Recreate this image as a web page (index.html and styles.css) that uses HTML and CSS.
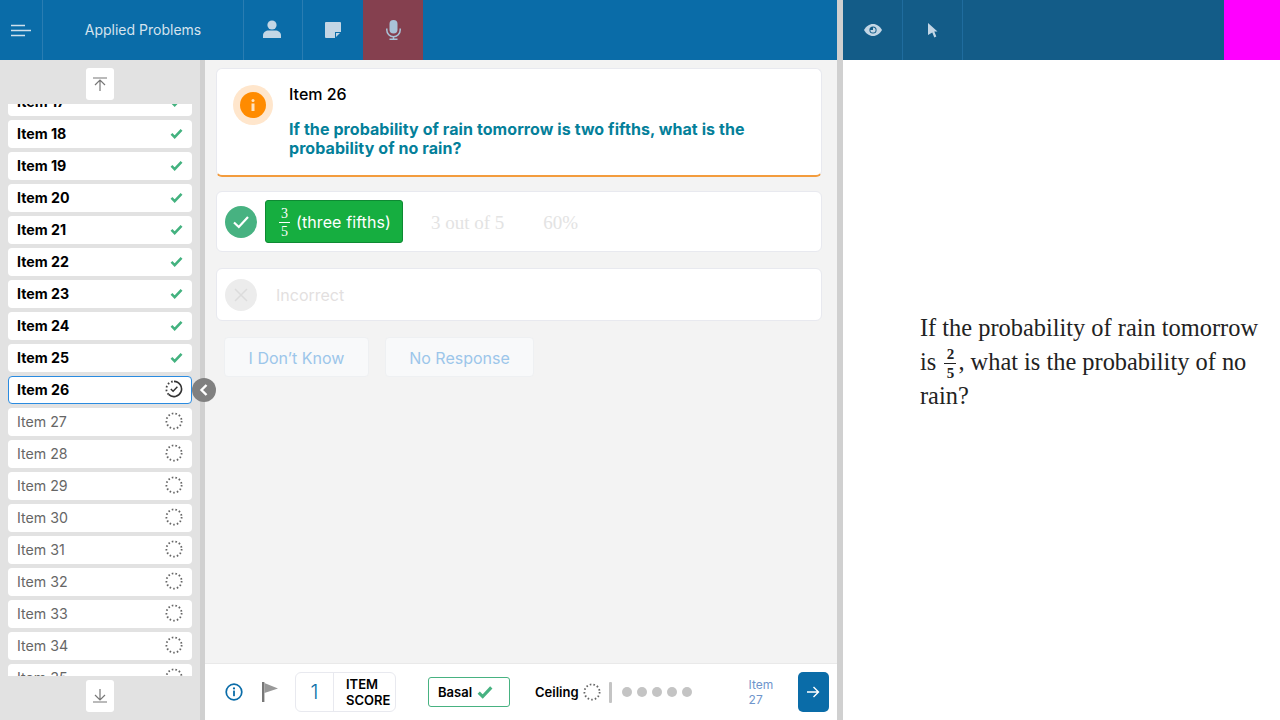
FILE: index.html
```html
<!DOCTYPE html>
<html lang="en">
<head>
<meta charset="utf-8">
<title>Applied Problems</title>
<link rel="stylesheet" href="styles.css">
</head>
<body>
<svg class="defs" width="0" height="0" aria-hidden="true">
  <symbol id="tick" viewBox="0 0 14 12"><path d="M1.500 6.500 5 10l7.500-8" fill="none" stroke="currentColor" stroke-width="2.800"/></symbol>
  <symbol id="pending" viewBox="0 0 18 18"><circle cx="9" cy="9" r="7.600" fill="none" stroke="#666" stroke-width="1.800" stroke-dasharray="1.600 2.100"/></symbol>
</svg>
<div class="app">
  <section class="left">
    <header class="bar bar-left">
      <div class="cell cell-menu">
        <svg width="20" height="13" viewBox="0 0 20 13"><path d="M0 1.500h14M0 6.500h20M0 11.500h14" stroke="#cfe0ec" stroke-width="1.600"/></svg>
      </div>
      <div class="cell cell-title">Applied Problems</div>
      <div class="cell cell-icon">
        <svg width="18" height="18" viewBox="0 0 18 18"><circle cx="9" cy="5" r="4.600" fill="#c3d6e5"/><path d="M0 18v-2.500C0 12.500 3 10.600 5.500 10.600h7c2.500 0 5.500 1.900 5.500 4.900V18z" fill="#c3d6e5"/></svg>
      </div>
      <div class="cell cell-note">
        <svg width="16" height="16" viewBox="0 0 16 16"><path d="M1 0h14a1 1 0 0 1 1 1v9H10v6H1a1 1 0 0 1-1-1V1a1 1 0 0 1 1-1z" fill="#c3d6e5"/><path d="M11 11h4l-4 4z" fill="#c3d6e5"/></svg>
      </div>
      <div class="cell cell-mic">
        <svg width="15" height="20" viewBox="0 0 15 20"><rect x="3.500" y="0" width="8" height="13.500" rx="4" fill="#a9c3d8"/><path d="M.8 8.500v1.500a6.700 6.700 0 0 0 13.400 0V8.500M7.500 16.700V19.500M3.500 19.300h8" fill="none" stroke="#a9c3d8" stroke-width="1.500"/></svg>
      </div>
    </header>
    <div class="workspace">
      <aside class="sidebar">
        <div class="scroll-row scroll-top">
          <button class="scroll-btn" aria-label="Scroll to top">
            <svg width="14" height="14" viewBox="0 0 14 14"><path d="M0 1h14M7 14V3M2 8l5-5 5 5" fill="none" stroke="#777" stroke-width="1.200"/></svg>
          </button>
        </div>
        <div class="list">
          <ul class="list-inner">
            <li class="item done">Item 17<svg class="tick"><use href="#tick"/></svg></li>
            <li class="item done">Item 18<svg class="tick"><use href="#tick"/></svg></li>
            <li class="item done">Item 19<svg class="tick"><use href="#tick"/></svg></li>
            <li class="item done">Item 20<svg class="tick"><use href="#tick"/></svg></li>
            <li class="item done">Item 21<svg class="tick"><use href="#tick"/></svg></li>
            <li class="item done">Item 22<svg class="tick"><use href="#tick"/></svg></li>
            <li class="item done">Item 23<svg class="tick"><use href="#tick"/></svg></li>
            <li class="item done">Item 24<svg class="tick"><use href="#tick"/></svg></li>
            <li class="item done">Item 25<svg class="tick"><use href="#tick"/></svg></li>
            <li class="item current">Item 26
              <svg class="ring" viewBox="0 0 18 18"><path d="M9 1.400a7.600 7.600 0 1 1-5.400 13" fill="none" stroke="#333" stroke-width="1.600"/><path d="M3.600 14.400A7.600 7.600 0 0 1 9 1.400" fill="none" stroke="#444" stroke-width="1.800" stroke-dasharray="1.600 2.100"/><path d="M5.800 9l2.300 2.300 4.300-4.600" fill="none" stroke="#333" stroke-width="1.400"/></svg>
            </li>
            <li class="item">Item 27<svg class="ring"><use href="#pending"/></svg></li>
            <li class="item">Item 28<svg class="ring"><use href="#pending"/></svg></li>
            <li class="item">Item 29<svg class="ring"><use href="#pending"/></svg></li>
            <li class="item">Item 30<svg class="ring"><use href="#pending"/></svg></li>
            <li class="item">Item 31<svg class="ring"><use href="#pending"/></svg></li>
            <li class="item">Item 32<svg class="ring"><use href="#pending"/></svg></li>
            <li class="item">Item 33<svg class="ring"><use href="#pending"/></svg></li>
            <li class="item">Item 34<svg class="ring"><use href="#pending"/></svg></li>
            <li class="item">Item 35<svg class="ring"><use href="#pending"/></svg></li>
          </ul>
        </div>
        <div class="scroll-row scroll-bottom">
          <button class="scroll-btn" aria-label="Scroll to bottom">
            <svg width="14" height="14" viewBox="0 0 14 14"><path d="M0 13h14M7 0v11M2 6l5 5 5-5" fill="none" stroke="#777" stroke-width="1.200"/></svg>
          </button>
        </div>
        <button class="collapse" aria-label="Collapse">
          <svg width="10" height="12" viewBox="0 0 10 12"><path d="M7.500 1 2.500 6l5 5" fill="none" stroke="#fff" stroke-width="2.400"/></svg>
        </button>
      </aside>
      <main class="main">
        <div class="content">
          <div class="card question">
            <div class="halo"><span class="dot">
              <svg width="4" height="12" viewBox="0 0 4 12"><circle cx="2" cy="1.600" r="1.500" fill="#ffe3bf"/><rect x=".5" y="4.500" width="3" height="7.500" fill="#ffe3bf"/></svg>
            </span></div>
            <div class="q-text">
              <h1>Item 26</h1>
              <p>If the probability of rain tomorrow is two fifths, what is the probability of no rain?</p>
            </div>
          </div>
          <div class="card row-correct">
            <span class="state ok"><svg width="18" height="14" viewBox="0 0 18 14"><path d="M2 7.500 6.800 12 16 2" fill="none" stroke="#fff" stroke-width="2.200"/></svg></span>
            <button class="answer"><span class="frac"><span>3</span><span class="den">5</span></span><span class="ans-text">(three fifths)</span></button>
            <span class="alt alt-first">3 out of 5</span>
            <span class="alt">60%</span>
          </div>
          <div class="card row-wrong">
            <span class="state no"><svg width="16" height="16" viewBox="0 0 16 16"><path d="M2 2l12 12M14 2 2 14" stroke="#dcdcdc" stroke-width="1.500"/></svg></span>
            <span class="wrong-label">Incorrect</span>
          </div>
          <div class="actions">
            <button class="ghost">I Don’t Know</button>
            <button class="ghost">No Response</button>
          </div>
        </div>
        <footer class="footer">
          <svg class="f-info" width="18" height="18" viewBox="0 0 18 18"><circle cx="9" cy="9" r="7.800" fill="none" stroke="#0a6ca8" stroke-width="1.700"/><circle cx="9" cy="5.400" r="1.100" fill="#0a6ca8"/><rect x="8.100" y="7.600" width="1.800" height="5.600" fill="#0a6ca8"/></svg>
          <svg class="f-flag" width="16" height="20" viewBox="0 0 16 20"><rect x="0" y="0" width="2.400" height="20" fill="#777"/><path d="M2.400 1 16 6.500 2.400 11z" fill="#999"/></svg>
          <div class="score"><span class="score-num">1</span><span class="score-label">ITEM<br>SCORE</span></div>
          <div class="basal">Basal<svg class="basal-tick"><use href="#tick"/></svg></div>
          <div class="ceiling">Ceiling<svg class="ring"><use href="#pending"/></svg></div>
          <span class="divider"></span>
          <div class="dots"><i></i><i></i><i></i><i></i><i></i></div>
          <div class="next-label">Item<br>27</div>
          <button class="next" aria-label="Next item">
            <svg width="14" height="12" viewBox="0 0 14 12"><path d="M1 6h11.500M7.500 1l5 5-5 5" fill="none" stroke="#fff" stroke-width="1.400"/></svg>
          </button>
        </footer>
      </main>
    </div>
  </section>
  <div class="splitter"></div>
  <section class="right">
    <header class="bar bar-right">
      <div class="cell cell-eye">
        <svg width="18" height="12" viewBox="0 0 18 12"><path d="M0 6c2-3.600 5.200-6 9-6s7 2.400 9 6c-2 3.600-5.200 6-9 6S2 9.600 0 6z" fill="#c3d6e5"/><circle cx="9" cy="6" r="3.600" fill="#135c88"/><path d="M9 3.400A2.600 2.600 0 1 1 6.400 6H9z" fill="#c3d6e5"/></svg>
      </div>
      <div class="cell cell-eye">
        <svg width="10" height="15" viewBox="0 0 10 15"><path d="M0 0l9.500 8.500H6.300l2 5-2 1-2-5L0 12z" fill="#c3d6e5"/></svg>
      </div>
      <div class="spacer"></div>
      <div class="magenta"></div>
    </header>
    <div class="stimulus">
      <p>If the probability of rain tomorrow is <span class="frac stim-frac"><span>2</span><span class="den">5</span></span>, what is the probability of no rain?</p>
    </div>
  </section>
</div>
</body>
</html>
```

FILE: styles.css
```css
* { box-sizing: border-box; }
html, body { margin: 0; padding: 0; height: 100%; }
body { font-family: Inter, "Liberation Sans", sans-serif; overflow: hidden; background: #fff; color: #000; }
button { font: inherit; border: 0; padding: 0; cursor: pointer; }
.defs { position: absolute; }

.app { display: flex; width: 1280px; height: 720px; }
.left { width: 837px; display: flex; flex-direction: column; }
.splitter { width: 6px; background: #d0d0d0; }
.right { flex: 1; display: flex; flex-direction: column; }

.bar { height: 60px; display: flex; flex: none; }
.bar-left { background: #0a6ca8; }
.bar-right { background: #135c88; }
.cell { display: flex; align-items: center; justify-content: center; border-right: 1px solid #2a7db2; }
.cell-menu { width: 43px; }
.cell-title { width: 201px; color: #d5e3ee; font-size: 14px; font-weight: 400; padding-bottom: 1px; }
.cell-icon { width: 59px; padding: 0 2px 2px 0; }
.cell-note { width: 60px; border-right: 0; }
.cell-mic { width: 60px; background: #85404f; border-right: 0; }
.cell-eye { width: 60px; border-right-color: #1f6c9e; }
.spacer { flex: 1; }
.magenta { width: 56px; background: #ff00ff; }

.workspace { flex: 1; display: flex; min-height: 0; }
.sidebar { position: relative; width: 205px; flex: none; background: #e2e2e2; border-right: 5px solid #d0d0d0; display: flex; flex-direction: column; }
.scroll-row { flex: none; display: flex; justify-content: center; }
.scroll-top { height: 44px; padding-top: 8px; }
.scroll-bottom { height: 44px; padding-top: 4px; }
.scroll-btn { width: 28px; height: 32px; background: #fff; border-radius: 3px; display: flex; align-items: center; justify-content: center; }
.list { flex: 1; overflow: hidden; min-height: 0; }
.list-inner { list-style: none; margin: -16px 0 0; padding: 0 8px; display: flex; flex-direction: column; gap: 4px; }
.item { flex: none; height: 28px; background: #fff; border-radius: 4px; display: flex; align-items: center; justify-content: space-between; padding: 0 9px 2px; font-size: 14.200px; color: #666; }
.item.done { font-weight: 700; color: #000; }
.item.current { font-weight: 700; color: #000; border: 1px solid #2a8be0; padding: 0 8px 2px; }
.tick { width: 13px; height: 11px; color: #43b27f; }
.ring { width: 18px; height: 18px; flex: none; }
.collapse { position: absolute; right: -16px; top: 318px; width: 24px; height: 24px; border-radius: 50%; background: #808080; display: flex; align-items: center; justify-content: center; }

.main { flex: 1; min-width: 0; display: flex; flex-direction: column; background: #f3f3f3; }
.content { flex: 1; padding: 8px 15px 0 11px; display: flex; flex-direction: column; }
.card { background: #fff; border: 1px solid #e8e9ef; border-radius: 6px; }
.question { height: 109px; margin-bottom: 14px; display: flex; padding: 16px 16px 0 16px; border-bottom: 2px solid #f39c3d; }
.halo { width: 40px; height: 40px; border-radius: 50%; background: #ffe6cc; display: flex; align-items: center; justify-content: center; flex: none; }
.dot { width: 26px; height: 26px; border-radius: 50%; background: #ff8b00; display: flex; align-items: center; justify-content: center; }
.q-text { margin: -1px 0 0 16px; }
h1 { margin: 0; font-size: 16px; font-weight: 500; line-height: 20px; }
.q-text p { margin: 16px 0 0; font-size: 16px; line-height: 19px; font-weight: 700; letter-spacing: .08px; color: #04809a; }
.row-correct { height: 61px; margin-bottom: 16px; display: flex; align-items: center; padding-left: 8px; }
.state { width: 32px; height: 32px; border-radius: 50%; display: flex; align-items: center; justify-content: center; flex: none; }
.state.ok { background: #47b281; }
.state.no { background: #ececec; }
.answer { margin-left: 8px; height: 43px; width: 138px; background: #16ae40; border: 1px solid #0e8a33; border-radius: 3px; color: #fff; display: flex; align-items: center; padding: 1px 0 0 13px; font-size: 16px; }
.frac { display: inline-flex; flex-direction: column; align-items: center; width: 11px; font-family: "Liberation Serif", serif; font-size: 14px; line-height: 17px; }
.frac .den { border-top: 1px solid currentColor; width: 100%; text-align: center; }
.ans-text { margin-left: 6px; letter-spacing: .1px; }
.alt { font-family: "Liberation Serif", serif; font-size: 19px; color: #e3e3e3; margin: 2px 0 0 39px; }
.alt-first { margin-left: 28px; }
.row-wrong { height: 53px; margin-bottom: 16px; display: flex; align-items: center; padding-left: 8px; }
.wrong-label { margin-left: 19px; font-size: 16px; color: #e3dfdf; }
.actions { display: flex; gap: 16px; padding-left: 8px; }
.ghost { height: 40px; background: #f8f9fa; border: 1px solid #eef0f2; border-radius: 4px; color: #9cc6ea; font-size: 16px; padding-top: 1px; }
.ghost:first-child { width: 145px; }
.ghost:last-child { width: 149px; }

.footer { flex: none; height: 57px; background: #fff; border-top: 1px solid #e9e9e9; display: flex; align-items: center; padding-left: 20px; }
.f-info { flex: none; }
.f-flag { flex: none; margin-left: 19px; }
.score { margin-left: 17px; width: 101px; height: 40px; border: 1px solid #e8e9ef; border-radius: 6px; display: flex; align-items: center; }
.score-num { width: 38px; height: 100%; border-right: 1px solid #e8e9ef; display: flex; align-items: center; justify-content: center; font-size: 20px; font-weight: 300; color: #0a6ca8; }
.score-label { margin-left: 12px; font-size: 13px; line-height: 16px; font-weight: 600; }
.basal { margin-left: 32px; width: 82px; height: 30px; border: 1.500px solid #47b281; border-radius: 3px; display: flex; align-items: center; padding-left: 9px; font-size: 13px; font-weight: 600; }
.basal-tick { width: 16px; height: 14px; margin-left: 5px; color: #47b281; }
.ceiling { margin-left: 25px; display: flex; align-items: center; font-size: 13px; font-weight: 600; gap: 4px; }
.divider { width: 3px; height: 21px; background: #c4c4c4; margin-left: 8px; border-radius: 1px; }
.dots { display: flex; gap: 5px; margin-left: 10px; }
.dots i { width: 10px; height: 10px; border-radius: 50%; background: #c4c4c4; }
.next-label { margin-left: 57px; width: 49px; font-size: 12px; line-height: 15px; color: #6f95cc; }
.next { width: 31px; height: 40px; border-radius: 5px; background: #0a6ca8; display: flex; align-items: center; justify-content: center; }

.stimulus { flex: 1; display: flex; align-items: center; padding: 0 15px 56px 77px; }
.stimulus p { margin: 0; font-family: "Liberation Serif", serif; font-size: 24.400px; line-height: 33.500px; color: #222; }
.stim-frac { vertical-align: middle; font-size: 15px; line-height: 18px; margin: -3px 2px; width: 12px; font-weight: 700; }
```
